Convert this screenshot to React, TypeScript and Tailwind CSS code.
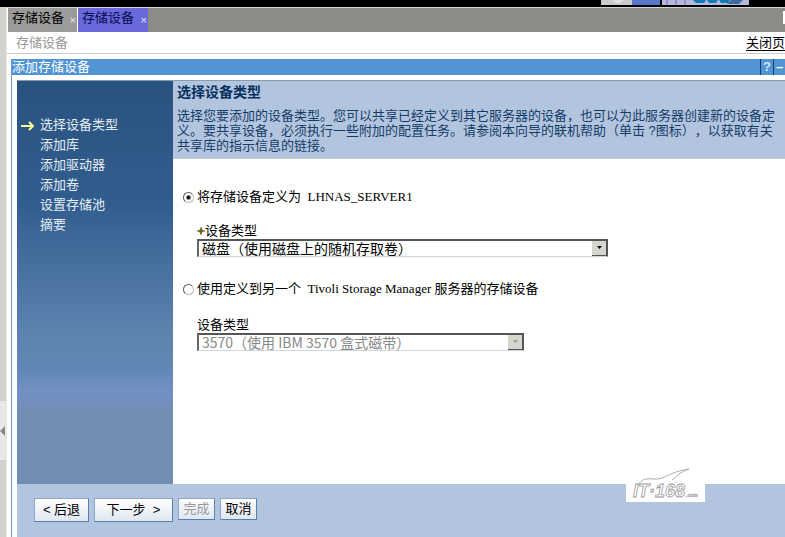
import { useState } from 'react'

const passos = [
  "选择设备类型",
  "添加库",
  "添加驱动器",
  "添加卷",
  "设置存储池",
  "摘要",
];

function Abas() {
  return (
    <nav className="flex h-[25px] items-stretch border-t border-gray-300 bg-[#8a8c88]">
      <div className="flex w-[71px] items-start justify-between border-x border-white bg-[#9b9c99] pl-1 pr-px">
        <a href="#" className="leading-5 text-black">存储设备</a>
        <button type="button" aria-label="关闭" className="text-[11px] leading-6 text-gray-200">×</button>
      </div>
      <div className="flex w-[70px] items-start justify-between bg-[#6969dc] pl-1 pr-px">
        <a href="#" className="leading-5 text-[#0a0a50]">存储设备</a>
        <button type="button" aria-label="关闭" className="text-[11px] leading-6 text-gray-200">×</button>
      </div>
      <span className="ml-auto mt-[3px] h-[13px] w-0.5 bg-white" />
    </nav>
  );
}

function Lista({ id, texto, disabled = false, className = "" }: { id: string; texto: string; disabled?: boolean; className?: string }) {
  return (
    <div className={`relative h-[18px] ${className}`}>
      <select
        id={id}
        disabled={disabled}
        className={`h-full w-full appearance-none border-t-2 border-l-2 border-r border-b border-t-[#555] border-l-[#666] border-r-[#555] border-b-gray-300 bg-white pl-[3px] text-[14px] leading-[15px] [text-spacing-trim:space-all] ${disabled ? "text-[#888] opacity-100" : "text-black"}`}
      >
        <option>{texto}</option>
      </select>
      {/* botao da seta */}
      <span className="pointer-events-none absolute right-px top-0.5 flex h-[15px] w-[15px] items-center justify-center border-r border-b border-[#555] bg-[#d6d6ce]">
        <svg width="7" height="4" viewBox="0 0 7 4">
          <path d="M1 0h5L3.5 3z" fill={disabled ? "#999" : "#000"} />
        </svg>
      </span>
    </div>
  );
}

function Radio({ id, checked, onChange }: { id: string; checked: boolean; onChange: () => void }) {
  return (
    <input
      type="radio"
      id={id}
      name="origem"
      checked={checked}
      onChange={onChange}
      className="mr-[3px] h-[11px] w-[11px] shrink-0 appearance-none rounded-full border border-t-[#555] border-l-[#555] border-r-[#bbb] border-b-[#bbb] bg-white checked:bg-[radial-gradient(circle,#000_1px,#fff_3px)]"
    />
  );
}

function Logo() {
  return (
    <svg viewBox="0 0 79 34" className="h-[34px] w-[79px] bg-white" role="img" aria-label="IT168">
      <path d="M13 16c2-4 7-6 15-5 11 1 14-7 35-10-7 2-11 6-17 11" fill="none" stroke="#aaa" strokeWidth="1" />
      <g fill="#fff" stroke="#999" fontFamily="Liberation Sans, sans-serif" fontStyle="italic" fontWeight="bold">
        <text x="7" y="29" fontSize="18" strokeWidth="0.8">IT·168</text>
        <text x="60" y="29" fontSize="5" strokeWidth="0.4">.com</text>
      </g>
    </svg>
  );
}

export default function App() {
  const [origem, setOrigem] = useState("novo");
  const botao = "border border-[#8ba6c8] border-r-[#557fae] border-b-[#557fae] bg-gradient-to-b from-white to-[#dfe7f2]";

  return (
    <div className="flex min-h-screen flex-col overflow-hidden bg-white font-['Liberation_Sans','Noto_Sans_CJK_SC',sans-serif] text-[13px] leading-4 text-black">
      {/* faixa preta do topo */}
      <div className="flex h-[7px] justify-end bg-black pb-0.5 pr-9">
        <svg width="148" height="5" viewBox="0 0 148 5">
          <path d="M0 0h31v5H0z" fill="#ccc" />
          <path d="M12 0h10l-3 3h-4z" fill="#e4e2de" />
          <path d="M31 0h28v5H31z" fill="#5578c8" />
          <path d="M61 0h87v5H61z" fill="#b5b8dc" />
          <path d="M66 0v5M75 0v5M84 0v5" stroke="#8f8fc4" strokeWidth="2" />
          <path d="M92 0h13l-2 3h-8zM106 0h11l-2 3h-7zM118 0h11l-2 3h-7z" fill="#147cb4" />
          <path d="M130 0h12l-4 4h-12z" fill="#3f6a9c" />
        </svg>
      </div>

      <div className="flex flex-1">
        <aside className="flex w-[7px] shrink-0 flex-col border-r border-gray-200 bg-[#d2d2ce]">
          <button type="button" aria-label="收起" className="mt-[394px] flex h-[59px] w-full items-center bg-[#e8e8e6]">
            <svg width="5" height="10" viewBox="0 0 5 10"><path d="M5 0v10L0 5z" fill="#888" /></svg>
          </button>
        </aside>

        <div className="flex min-w-0 flex-1 flex-col">
          <Abas />
          <div className="flex h-[22px] items-center justify-between border-b border-[#c8cfc9] pl-[9px]">
            <span className="text-[#999]">存储设备</span>
            <a href="#" className="whitespace-nowrap border-b border-black leading-[15px]">关闭页</a>
          </div>

          <section className="ml-1 mt-[5px] flex flex-1 flex-col border-l border-[#6b98c8]">
            <div className="flex h-4 items-stretch bg-[#5094d4] text-white">
              <h1 className="flex-1">添加存储设备</h1>
              <button type="button" aria-label="帮助" className="w-[13px] border-l border-[#123c6c] font-bold text-[#d4e8ff]">?</button>
              <button type="button" aria-label="最小化" className="w-3 border-l border-[#123c6c] font-bold">–</button>
            </div>

            <div className="ml-[5px] mt-[5px] flex flex-1 flex-col border-t border-[#879baa]">
              <div className="flex h-[403px]">
                <ol className="w-[156px] shrink-0 bg-[linear-gradient(#29527e_0%,#315d8e_30%,#5b83ae_62%,#6289b5_72%,#7290c4_77%,#728eb5_82%,#718db3_100%)] pt-[34px] leading-5 text-[#e4edf4]">
                  {passos.map((passo, i) => (
                    <li key={passo} className="flex items-center pl-[3px]">
                      <span className="w-5">
                        {i === 0 && (
                          <svg width="15" height="11" viewBox="0 0 15 11" fill="none" stroke="#ffffa0" strokeWidth="2">
                            <path d="M1 6h12M9 2l4 4-4 4" />
                          </svg>
                        )}
                      </span>
                      {passo}
                    </li>
                  ))}
                </ol>

                <main className="min-w-0 flex-1">
                  <header className="h-[78px] border-b border-[#c5cbd4] bg-[#b3c5de] pl-1 pt-[3px] text-[#143c69]">
                    <h2 className="mb-2 text-[14px] font-bold text-[#06305e]">选择设备类型</h2>
                    <p className="leading-[15px] [text-spacing-trim:space-all]">
                      选择您要添加的设备类型。您可以共享已经定义到其它服务器的设备，也可以为此服务器创建新的设备定义。要共享设备，必须执行一些附加的配置任务。请参阅本向导的联机帮助（单击 ?图标），以获取有关共享库的指示信息的链接。
                    </p>
                  </header>

                  <form className="pl-[10px] pt-[30px] font-['Liberation_Serif','Noto_Sans_CJK_SC',serif]">
                    <div className="flex items-center">
                      <Radio id="novo" checked={origem === "novo"} onChange={() => setOrigem("novo")} />
                      <label htmlFor="novo">将存储设备定义为&nbsp; LHNAS_SERVER1</label>
                    </div>
                    <div className="ml-[14px] mt-[18px]">
                      <label htmlFor="tipo1" className="flex items-center">
                        <svg width="8" height="8" viewBox="0 0 8 8"><path d="M4 0l1 3 3 1-3 1-1 3-1-3-3-1 3-1z" fill="#665f14" stroke="#665f14" strokeWidth="0.5" /></svg>
                        设备类型
                      </label>
                      <Lista id="tipo1" texto="磁盘（使用磁盘上的随机存取卷）" className="w-[411px] font-['Noto_Sans_CJK_SC',sans-serif]" />
                    </div>
                    <div className="mt-6 flex items-center">
                      <Radio id="outro" checked={origem === "outro"} onChange={() => setOrigem("outro")} />
                      <label htmlFor="outro">使用定义到另一个&nbsp; Tivoli Storage Manager 服务器的存储设备</label>
                    </div>
                    <div className="ml-[14px] mt-5">
                      <label htmlFor="tipo2" className="block">设备类型</label>
                      <Lista id="tipo2" texto="3570（使用 IBM 3570 盒式磁带）" disabled className="w-[327px] font-['Noto_Sans_CJK_SC',sans-serif]" />
                    </div>
                  </form>
                </main>
              </div>

              <footer className="relative flex flex-1 items-start gap-[5px] bg-[#b3c5de] pl-[17px] pt-[14px]">
                <button type="button" className={`${botao} h-6 w-[55px]`}>&lt; 后退</button>
                <button type="button" className={`${botao} h-6 w-[79px]`}>下一步 &nbsp;&gt;</button>
                <button type="button" disabled className={`${botao} h-[22px] w-[37px] text-[#999]`}>完成</button>
                <button type="button" className={`${botao} h-[22px] w-[37px]`}>取消</button>
                <div className="absolute -top-4 right-20">
                  <Logo />
                </div>
              </footer>
            </div>
          </section>
        </div>
      </div>
    </div>
  );
}
